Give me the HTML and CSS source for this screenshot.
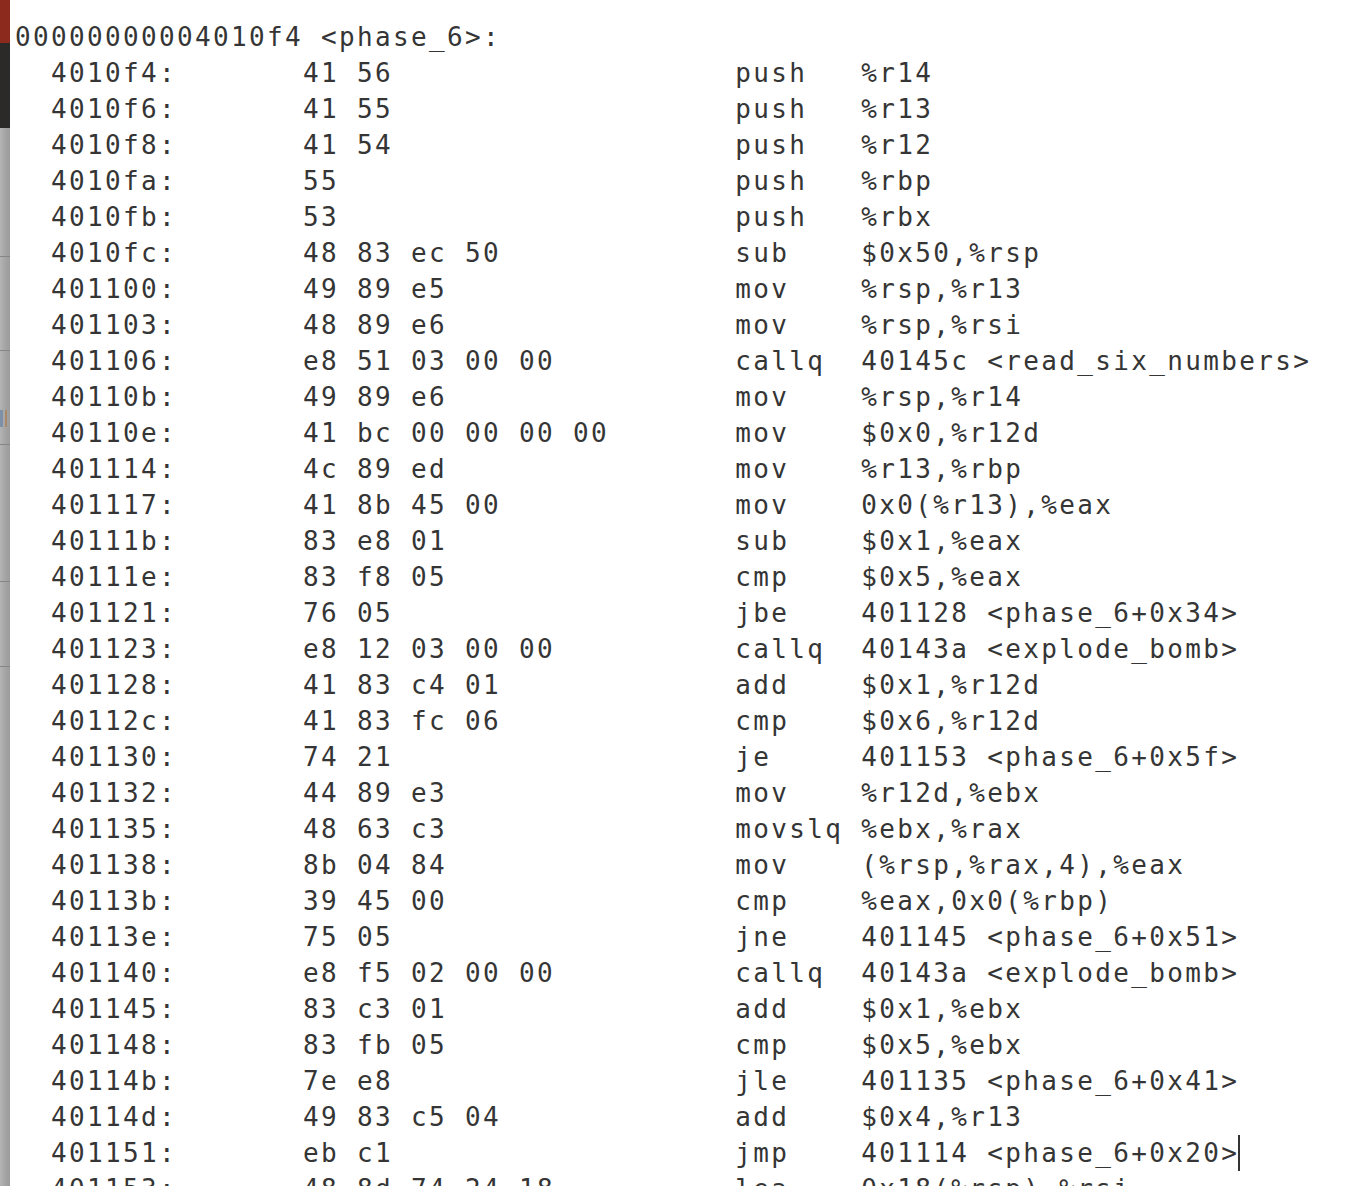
FILE: index.html
```html
<!DOCTYPE html>
<html>
<head>
<meta charset="utf-8">
<title>phase_6</title>
<link rel="stylesheet" href="styles.css">
</head>
<body>
<div class="window">
  <div class="sidebar">
    <div class="seg seg-red"></div>
    <div class="seg seg-dark"></div>
    <div class="seg seg-a"></div>
    <div class="seg seg-b"></div>
    <div class="seg seg-c"><div class="frag"></div></div>
    <div class="seg seg-d"></div>
    <div class="seg seg-e"></div>
    <div class="seg seg-f"></div>
  </div>
<pre class="code">00000000004010f4 &lt;phase_6&gt;:
  4010f4:       41 56                   push   %r14
  4010f6:       41 55                   push   %r13
  4010f8:       41 54                   push   %r12
  4010fa:       55                      push   %rbp
  4010fb:       53                      push   %rbx
  4010fc:       48 83 ec 50             sub    $0x50,%rsp
  401100:       49 89 e5                mov    %rsp,%r13
  401103:       48 89 e6                mov    %rsp,%rsi
  401106:       e8 51 03 00 00          callq  40145c &lt;read_six_numbers&gt;
  40110b:       49 89 e6                mov    %rsp,%r14
  40110e:       41 bc 00 00 00 00       mov    $0x0,%r12d
  401114:       4c 89 ed                mov    %r13,%rbp
  401117:       41 8b 45 00             mov    0x0(%r13),%eax
  40111b:       83 e8 01                sub    $0x1,%eax
  40111e:       83 f8 05                cmp    $0x5,%eax
  401121:       76 05                   jbe    401128 &lt;phase_6+0x34&gt;
  401123:       e8 12 03 00 00          callq  40143a &lt;explode_bomb&gt;
  401128:       41 83 c4 01             add    $0x1,%r12d
  40112c:       41 83 fc 06             cmp    $0x6,%r12d
  401130:       74 21                   je     401153 &lt;phase_6+0x5f&gt;
  401132:       44 89 e3                mov    %r12d,%ebx
  401135:       48 63 c3                movslq %ebx,%rax
  401138:       8b 04 84                mov    (%rsp,%rax,4),%eax
  40113b:       39 45 00                cmp    %eax,0x0(%rbp)
  40113e:       75 05                   jne    401145 &lt;phase_6+0x51&gt;
  401140:       e8 f5 02 00 00          callq  40143a &lt;explode_bomb&gt;
  401145:       83 c3 01                add    $0x1,%ebx
  401148:       83 fb 05                cmp    $0x5,%ebx
  40114b:       7e e8                   jle    401135 &lt;phase_6+0x41&gt;
  40114d:       49 83 c5 04             add    $0x4,%r13
  401151:       eb c1                   jmp    401114 &lt;phase_6+0x20&gt;<span class="caret"></span>
  401153:       48 8d 74 24 18          lea    0x18(%rsp),%rsi
</pre>
</div>
</body>
</html>
```

FILE: styles.css
```css
html, body {
  margin: 0;
  padding: 0;
  background: #ffffff;
}

.window {
  display: flex;
  width: 1352px;
  height: 1186px;
  overflow: hidden;
}

.sidebar {
  width: 10px;
  flex: none;
  display: flex;
  flex-direction: column;
  background: linear-gradient(to right, #b4b4b4, #a2a2a2 60%, #9c9c9c);
}

.seg {
  flex: none;
}

.seg-red {
  height: 43px;
  background: #8c2a1e;
}

.seg-dark {
  height: 85px;
  background: #2b2a28;
}

.seg-a { height: 128px; border-bottom: 1px solid #858585; }
.seg-b { height: 93px; border-bottom: 1px solid #858585; }
.seg-c { height: 93px; border-bottom: 1px solid #858585; display: flex; flex-direction: column; justify-content: flex-start; }
.seg-d { height: 136px; border-bottom: 1px solid #858585; }
.seg-e { height: 84px; border-bottom: 1px solid #858585; }
.seg-f { flex: 1; }

.frag {
  margin-top: 59px;
  width: 8px;
  height: 17px;
  background: linear-gradient(to right, #7e8fa8 0 3px, transparent 3px 5px, #a88a6a 5px 7px, transparent 7px);
}

.code {
  margin: 0;
  padding: 19px 0 0 5px;
  font-family: "DejaVu Sans Mono", "Liberation Mono", monospace;
  font-size: 26px;
  letter-spacing: 2.35px;
  line-height: 36px;
  color: #353535;
  white-space: pre;
}

.caret {
  display: inline-block;
  width: 2px;
  height: 36px;
  margin-left: -1px;
  vertical-align: top;
  background: #333333;
}
```
